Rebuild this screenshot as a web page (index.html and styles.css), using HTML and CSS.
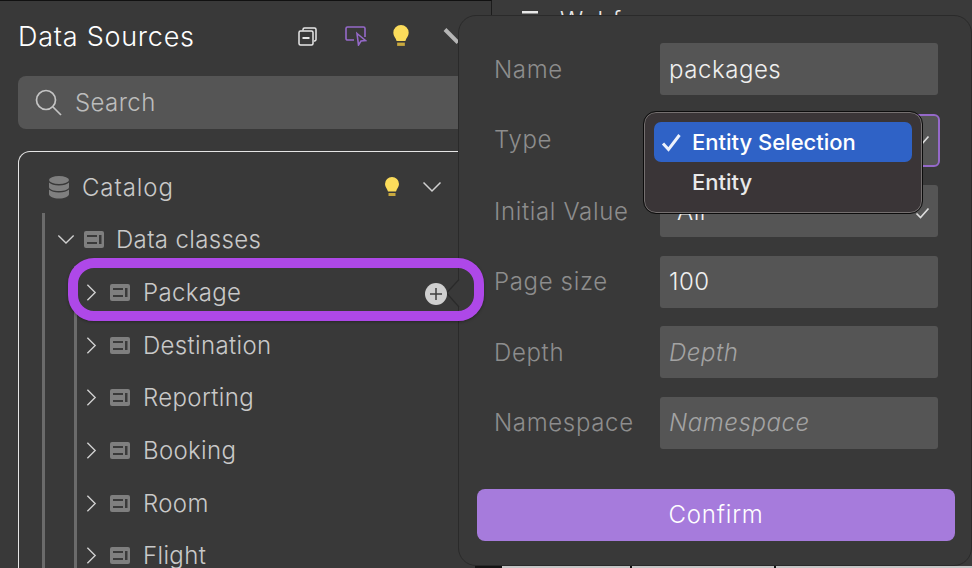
FILE: index.html
```html
<!DOCTYPE html>
<html>
<head>
	<meta http-equiv="Content-Type" content="text/html; charset=UTF-8">
	<title>Data Sources</title>
	<link rel="stylesheet" href="styles.css">
</head>
<body>

<svg class="defs" width="0" height="0">
	<symbol id="class-icon" viewBox="0 0 20 17">
		<rect width="20" height="17" rx="2" fill="#7f7f7f"/>
		<rect x="3" y="4" width="10" height="2" fill="#3a3a3a"/>
		<rect x="3" y="11" width="10" height="2" fill="#3a3a3a"/>
		<rect x="15" y="4" width="2.5" height="9" fill="#3a3a3a"/>
	</symbol>
	<symbol id="chev-right" viewBox="0 0 12 20">
		<path d="M1.5 1.5 10 10 1.5 18.5" fill="none" stroke="#d0d0d0" stroke-width="1.5"/>
	</symbol>
	<symbol id="chev-down" viewBox="0 0 20 12">
		<path d="M1.5 1.5 10 10 18.5 1.5" fill="none" stroke="#d0d0d0" stroke-width="1.5"/>
	</symbol>
	<symbol id="bulb" viewBox="0 0 16 20">
		<path d="M8 0a7 7 0 0 1 7 7c0 3-2.2 4.600-3 7.500H4C3.200 11.600 1 10 1 7a7 7 0 0 1 7-7z" fill="#fbdc5b"/>
		<rect x="4.500" y="16" width="7" height="3" fill="#c9a93f"/>
	</symbol>
</svg>

<div class="app">
	<aside class="sources">
		<header class="sources-head">
			<h1>Data Sources</h1>
			<div class="head-tools">
				<svg width="19" height="19" viewBox="0 0 19 19" fill="none" stroke="#e8e8e8" stroke-width="1.500">
					<path d="M5 3.500V2.500a1.500 1.500 0 0 1 1.500-1.500h10a1.500 1.500 0 0 1 1.500 1.500v10a1.500 1.500 0 0 1-1.500 1.500H16"/>
					<rect x="1" y="4" width="14" height="14" rx="1.500"/>
					<path d="M4.500 11h7" stroke-width="2"/>
				</svg>
				<svg width="22" height="20" viewBox="0 0 22 20" fill="none" stroke="#9569c9" stroke-width="1.600">
					<path d="M9 14H2.500A1.500 1.500 0 0 1 1 12.500v-10A1.500 1.500 0 0 1 2.500 1h16A1.500 1.500 0 0 1 20 2.500V11"/>
					<path d="M12 7.500 20.500 14.500 16 15 13.500 19z"/>
				</svg>
				<svg class="head-bulb" width="18" height="22"><use href="#bulb"/></svg>
				<svg class="head-cut" width="16" height="16" viewBox="0 0 16 16"><path d="M2 1.500 15 14.500" stroke="#b5b5b5" stroke-width="4"/></svg>
			</div>
		</header>

		<div class="search">
			<svg width="27" height="27" viewBox="0 0 27 27" fill="none" stroke="#c4c4c4" stroke-width="1.700">
				<circle cx="11" cy="11" r="9.500"/>
				<path d="M18 18 26 26"/>
			</svg>
			<span>Search</span>
		</div>

		<div class="tree">
			<div class="source-row">
				<svg class="db-icon" width="20" height="23" viewBox="0 0 20 23" fill="#7f7f7f">
					<ellipse cx="10" cy="4" rx="10" ry="4"/>
					<path d="M0 6.500c2 2 5.500 3 10 3s8-1 10-3V11c0 2.500-4.500 4-10 4S0 13.500 0 11z"/>
					<path d="M0 13.500c2 2 5.500 3 10 3s8-1 10-3V18c0 2.500-4.500 4.500-10 4.500S0 20.500 0 18z"/>
				</svg>
				<span class="source-name">Catalog</span>
				<svg class="source-bulb" width="16" height="20"><use href="#bulb"/></svg>
				<svg class="source-chev" width="20" height="12"><use href="#chev-down"/></svg>
			</div>
			<div class="source-body">
				<div class="row row-open">
					<svg class="chev-d" width="18" height="11"><use href="#chev-down"/></svg>
					<svg class="cls" width="20" height="17"><use href="#class-icon"/></svg>
					<span>Data classes</span>
				</div>
				<ul class="classes">
					<li class="row"><svg class="chev-r" width="11" height="19"><use href="#chev-right"/></svg><svg class="cls" width="20" height="17"><use href="#class-icon"/></svg><span>Package</span></li>
					<li class="row"><svg class="chev-r" width="11" height="19"><use href="#chev-right"/></svg><svg class="cls" width="20" height="17"><use href="#class-icon"/></svg><span>Destination</span></li>
					<li class="row"><svg class="chev-r" width="11" height="19"><use href="#chev-right"/></svg><svg class="cls" width="20" height="17"><use href="#class-icon"/></svg><span>Reporting</span></li>
					<li class="row"><svg class="chev-r" width="11" height="19"><use href="#chev-right"/></svg><svg class="cls" width="20" height="17"><use href="#class-icon"/></svg><span>Booking</span></li>
					<li class="row"><svg class="chev-r" width="11" height="19"><use href="#chev-right"/></svg><svg class="cls" width="20" height="17"><use href="#class-icon"/></svg><span>Room</span></li>
					<li class="row"><svg class="chev-r" width="11" height="19"><use href="#chev-right"/></svg><svg class="cls" width="20" height="17"><use href="#class-icon"/></svg><span>Flight</span></li>
				</ul>
			</div>
		</div>
	</aside>

	<main class="canvas">
		<div class="canvas-tab">
			<svg width="16" height="14" viewBox="0 0 16 14" fill="#e8e8e8"><rect width="16" height="2.500"/><rect y="6" width="16" height="2.500"/></svg>
			<span>Webform</span>
		</div>
		<div class="shelf">
			<i class="shelf-dark"></i>
			<i class="shelf-tick"></i>
			<i class="shelf-tick"></i>
		</div>
	</main>
</div>

<section class="popover">
	<form class="fields">
		<label>Name</label>
		<div class="field">packages</div>
		<label class="label-type">Type</label>
		<div class="field field-focus"><svg class="tick" width="15" height="12" viewBox="0 0 15 12" fill="none" stroke="#dcdcdc" stroke-width="1.700"><path d="M1.500 6.500 5.500 10.500 13.500 1.500"/></svg></div>
		<label>Initial Value</label>
		<div class="field field-select">All<svg class="tick" width="15" height="12" viewBox="0 0 15 12" fill="none" stroke="#dcdcdc" stroke-width="1.700"><path d="M1.500 6.500 5.500 10.500 13.500 1.500"/></svg></div>
		<label>Page size</label>
		<div class="field">100</div>
		<label>Depth</label>
		<div class="field field-empty">Depth</div>
		<label>Namespace</label>
		<div class="field field-empty">Namespace</div>
	</form>
	<button class="confirm" type="button">Confirm</button>
</section>

<svg class="popover-arrow" width="15" height="29" viewBox="0 0 15 29" fill="#393939" stroke="#2a2a2a" stroke-width="1.200">
	<path d="M14 0.500 1.500 14 14 28"/>
</svg>

<div class="menu">
	<div class="menu-item menu-item-on">
		<svg width="21" height="19" viewBox="0 0 21 19" fill="none" stroke="#eef2fb" stroke-width="3"><path d="M2 10.500 7.500 16.500 18.500 2"/></svg>
		<span>Entity Selection</span>
	</div>
	<div class="menu-item"><span>Entity</span></div>
</div>

<div class="callout"></div>

<div class="add-badge">
	<svg width="12" height="12" viewBox="0 0 12 12" stroke="#3f3f3f" stroke-width="1.500"><path d="M6 0V12M0 6H12"/></svg>
</div>

</body>
</html>
```

FILE: styles.css
```css
html, body { margin: 0; padding: 0; height: 100%; overflow: hidden; }
body { position: relative; background: #393939; font-family: Inter, "Noto Sans", sans-serif; font-weight: 300; color: #fff; }
.defs { position: absolute; }
svg { display: block; flex: none; }

.app { display: flex; height: 568px; }

/* left panel */
.sources { width: 492px; flex: none; box-sizing: border-box; border-top: 1px solid #111; border-right: 1px solid #1c1c1c; background: #393939; overflow: hidden; }
.sources-head { display: flex; align-items: center; height: 70px; padding: 0 0 0 18px; }
.sources-head h1 { margin: 0; width: 175px; flex: none; font-size: 27px; font-weight: 300; letter-spacing: 0.75px; white-space: nowrap; color: #fff; }
.head-tools { display: flex; align-items: center; margin-left: 105px; }
.head-tools svg:nth-child(2) { margin-left: 28px; }
.head-bulb { margin-left: 25px; }
.head-cut { margin-left: 33px; }

.search { display: flex; align-items: center; gap: 13px; height: 53px; margin: 5px 0 0 18px; padding-left: 17px; background: #555; border-radius: 8px; font-size: 24px; letter-spacing: 0.4px; color: #bcbcbc; }

.tree { margin: 22px -10px 0 18px; border: 1px solid #e6e6e6; border-bottom: 0; border-radius: 12px 12px 0 0; padding-top: 9px; height: 500px; }
.source-row { display: flex; align-items: center; height: 52px; padding-left: 30px; }
.source-name { width: 91px; margin-left: 13px; font-size: 24px; letter-spacing: 0.9px; color: #c9c9c9; }
.source-bulb { margin-left: 211px; }
.source-chev { margin-left: 22px; }

.source-body { margin-left: 23px; border-left: 3px solid #6b6b6b; }
.row { display: flex; align-items: center; height: 52.7px; font-size: 24px; letter-spacing: 0.35px; color: #c9c9c9; }
.row-open { padding-left: 12px; }
.row-open .cls { margin-left: 9px; }
.row-open span { margin-left: 12px; }

.classes { list-style: none; margin: 0.4px 0 0 29px; padding: 0; border-left: 3px solid #6b6b6b; }
.classes .row { padding-left: 9px; }
.chev-r { margin-right: 13px; }
.classes .row span { margin-left: 13px; }

/* right panel behind the form */
.canvas { flex: 1; min-width: 0; display: flex; flex-direction: column; justify-content: space-between; background: #3a3a3a; }
.canvas-tab { display: flex; align-items: flex-start; gap: 22px; padding: 11px 0 0 30px; font-size: 24px; letter-spacing: 0.8px; color: #e8e8e8; line-height: 11px; }
.canvas-tab span { margin-top: -4px; line-height: 28px; }
.shelf { display: flex; height: 2px; margin-left: -17px; background: #c6c6c6; }
.shelf-dark { width: 27px; background: #141414; }
.shelf-tick { width: 2px; margin-left: 128px; background: #141414; }
.shelf-tick + .shelf-tick { margin-left: 142px; }

/* form popover */
.popover { position: absolute; left: 458px; top: 15px; width: 514px; height: 551px; box-sizing: border-box; background: #393939; border: 1px solid #2a2a2a; border-radius: 18px; padding: 27px 17px 0 18px; }
.fields { display: grid; grid-template-columns: 183px 278px; column-gap: 0; row-gap: 18.6px; margin: 0; }
.fields label { display: flex; align-items: center; padding-left: 17px; font-size: 24px; letter-spacing: 0.65px; white-space: nowrap; color: #8d8d8d; }
.fields .label-type { padding-bottom: 2px; }
.field { position: relative; display: flex; align-items: center; height: 52px; box-sizing: border-box; padding-left: 9px; background: #555; border-radius: 3px; font-size: 24px; letter-spacing: 0.55px; color: #efefef; }
.field-focus { width: 280px; height: 53px; border: 2px solid #9569c9; border-radius: 6px; }
.field-select { padding-left: 17px; }
.field-empty { font-style: italic; color: #a3a3a3; }
.tick { position: absolute; right: 8px; top: 22px; }
.field-focus .tick { right: 8px; top: 19px; }
.confirm { display: block; width: 478px; height: 52px; margin-top: 40px; border: 0; border-radius: 8px; background: #a67bdc; font-family: inherit; font-size: 24px; font-weight: 300; letter-spacing: 0.8px; color: #fff; }

.popover-arrow { position: absolute; left: 445px; top: 279px; }

/* native select menu */
.menu { position: absolute; left: 644px; top: 112px; width: 278px; height: 101px; box-sizing: border-box; padding: 9px; background: #3a3537; border: 1px solid #757070; outline: 1px solid #0c0c0c; border-radius: 12px; }
.menu-item { display: flex; align-items: center; gap: 10px; height: 40px; padding-left: 7px; border-radius: 7px; font-size: 22px; font-weight: 500; color: #e9e9e9; }
.menu-item:not(.menu-item-on) { padding-left: 38px; }
.menu-item-on { background: #2f62c6; color: #fff; }

/* annotation ring */
.callout { position: absolute; left: 68px; top: 258px; width: 416px; height: 63px; box-sizing: border-box; border: 10px solid #ae48e8; border-radius: 26px; box-shadow: 0 1px 3px rgba(0, 0, 0, 0.35); }
.add-badge { position: absolute; left: 425px; top: 283px; width: 22px; height: 22px; display: flex; align-items: center; justify-content: center; background: #cfcfcf; border-radius: 50%; }
```
